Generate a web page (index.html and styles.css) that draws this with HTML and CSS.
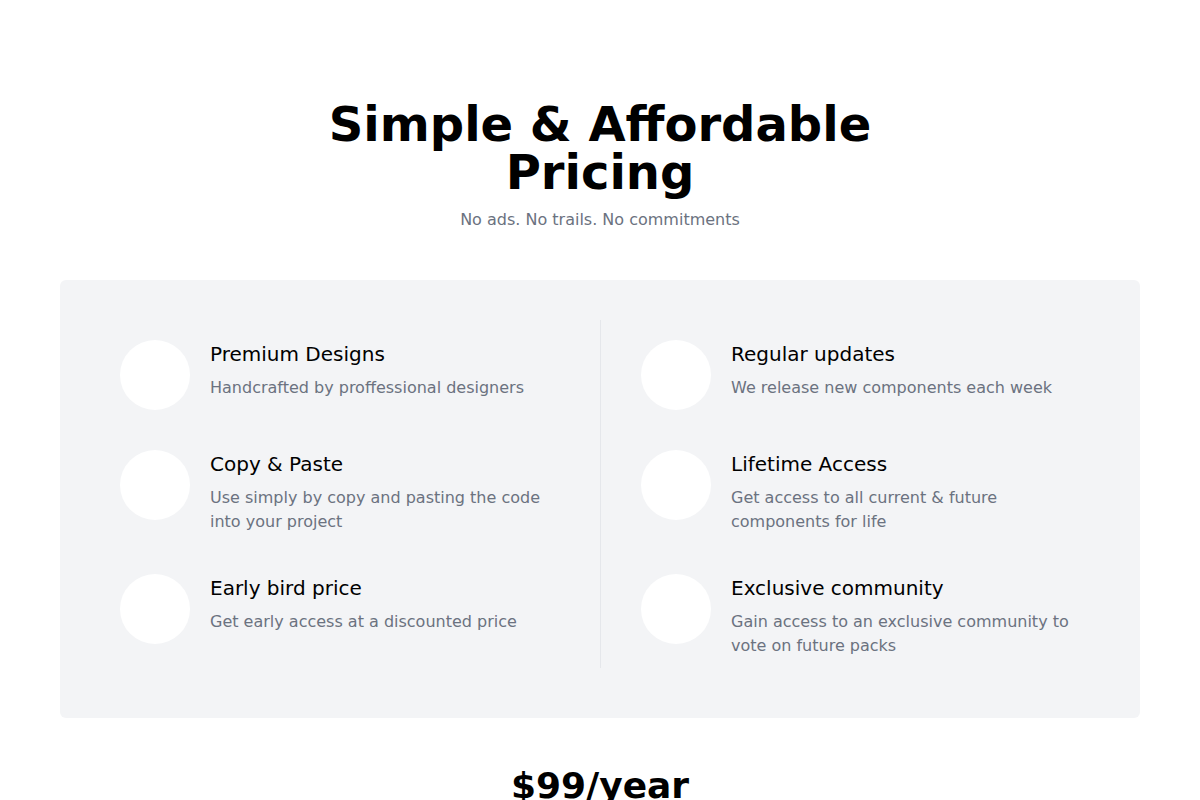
FILE: index.html
```html
<!DOCTYPE html>
<html lang="en">
<head>
  <meta charset="UTF-8">
  <meta name="viewport" content="width=device-width, initial-scale=1.0">
  <title>Pricing</title>
  <link rel="stylesheet" href="styles.css">
</head>
<body>
  <section class="pricing">
    <div class="header">
      <h1>Simple &amp; Affordable Pricing</h1>
      <p>No ads. No trails. No commitments</p>
    </div>

    <div class="card">
      <div class="features">
        <div class="col">
          <div class="feature">
            <div class="icon"></div>
            <div class="text">
              <h3>Premium Designs</h3>
              <p>Handcrafted by proffessional designers</p>
            </div>
          </div>
          <div class="feature">
            <div class="icon"></div>
            <div class="text">
              <h3>Copy &amp; Paste</h3>
              <p>Use simply by copy and pasting the code into your project</p>
            </div>
          </div>
          <div class="feature">
            <div class="icon"></div>
            <div class="text">
              <h3>Early bird price</h3>
              <p>Get early access at a discounted price</p>
            </div>
          </div>
        </div>

        <div class="col">
          <div class="feature">
            <div class="icon"></div>
            <div class="text">
              <h3>Regular updates</h3>
              <p>We release new components each week</p>
            </div>
          </div>
          <div class="feature">
            <div class="icon"></div>
            <div class="text">
              <h3>Lifetime Access</h3>
              <p>Get access to all current &amp; future components for life</p>
            </div>
          </div>
          <div class="feature">
            <div class="icon"></div>
            <div class="text">
              <h3>Exclusive community</h3>
              <p>Gain access to an exclusive community to vote on future packs</p>
            </div>
          </div>
        </div>
      </div>
    </div>

    <div class="price">
      <h2>$99/year</h2>
    </div>
  </section>
</body>
</html>
```

FILE: styles.css
```css
body {
  font-family: 'DejaVu Sans', sans-serif;
  margin: 0;
  padding: 0;
  background-color: #fff;
  color: #000;
}

.pricing {
  padding: 100px 60px 40px;
}

.header {
  text-align: center;
}

.header h1 {
  max-width: 600px;
  margin: 0 auto;
  font-size: 48px;
  line-height: 48px;
  font-weight: bold;
}

.header p {
  margin: 12px 0 0;
  font-size: 16px;
  line-height: 24px;
  color: #6b7280;
}

.card {
  margin-top: 48px;
  background-color: #f3f4f6;
  border-radius: 6px;
  padding: 40px 40px 50px;
}

.features {
  display: grid;
  grid-template-columns: 1fr 1fr;
}

.col {
  display: flex;
  flex-direction: column;
  gap: 40px;
  padding: 20px 40px 10px 20px;
}

.col + .col {
  border-left: 1px solid #e5e7eb;
  padding: 20px 20px 10px 40px;
}

.feature {
  display: flex;
  align-items: flex-start;
  gap: 20px;
}

.icon {
  flex: none;
  width: 70px;
  height: 70px;
  border-radius: 50%;
  background-color: #fff;
}

.text h3 {
  margin: 0;
  font-size: 20px;
  line-height: 28px;
  font-weight: normal;
  color: #000;
}

.text p {
  margin: 8px 0 0;
  font-size: 16px;
  line-height: 24px;
  color: #6b7280;
}

.price {
  text-align: center;
  margin-top: 48px;
}

.price h2 {
  margin: 0;
  font-size: 36px;
  line-height: 40px;
  font-weight: bold;
}
```
